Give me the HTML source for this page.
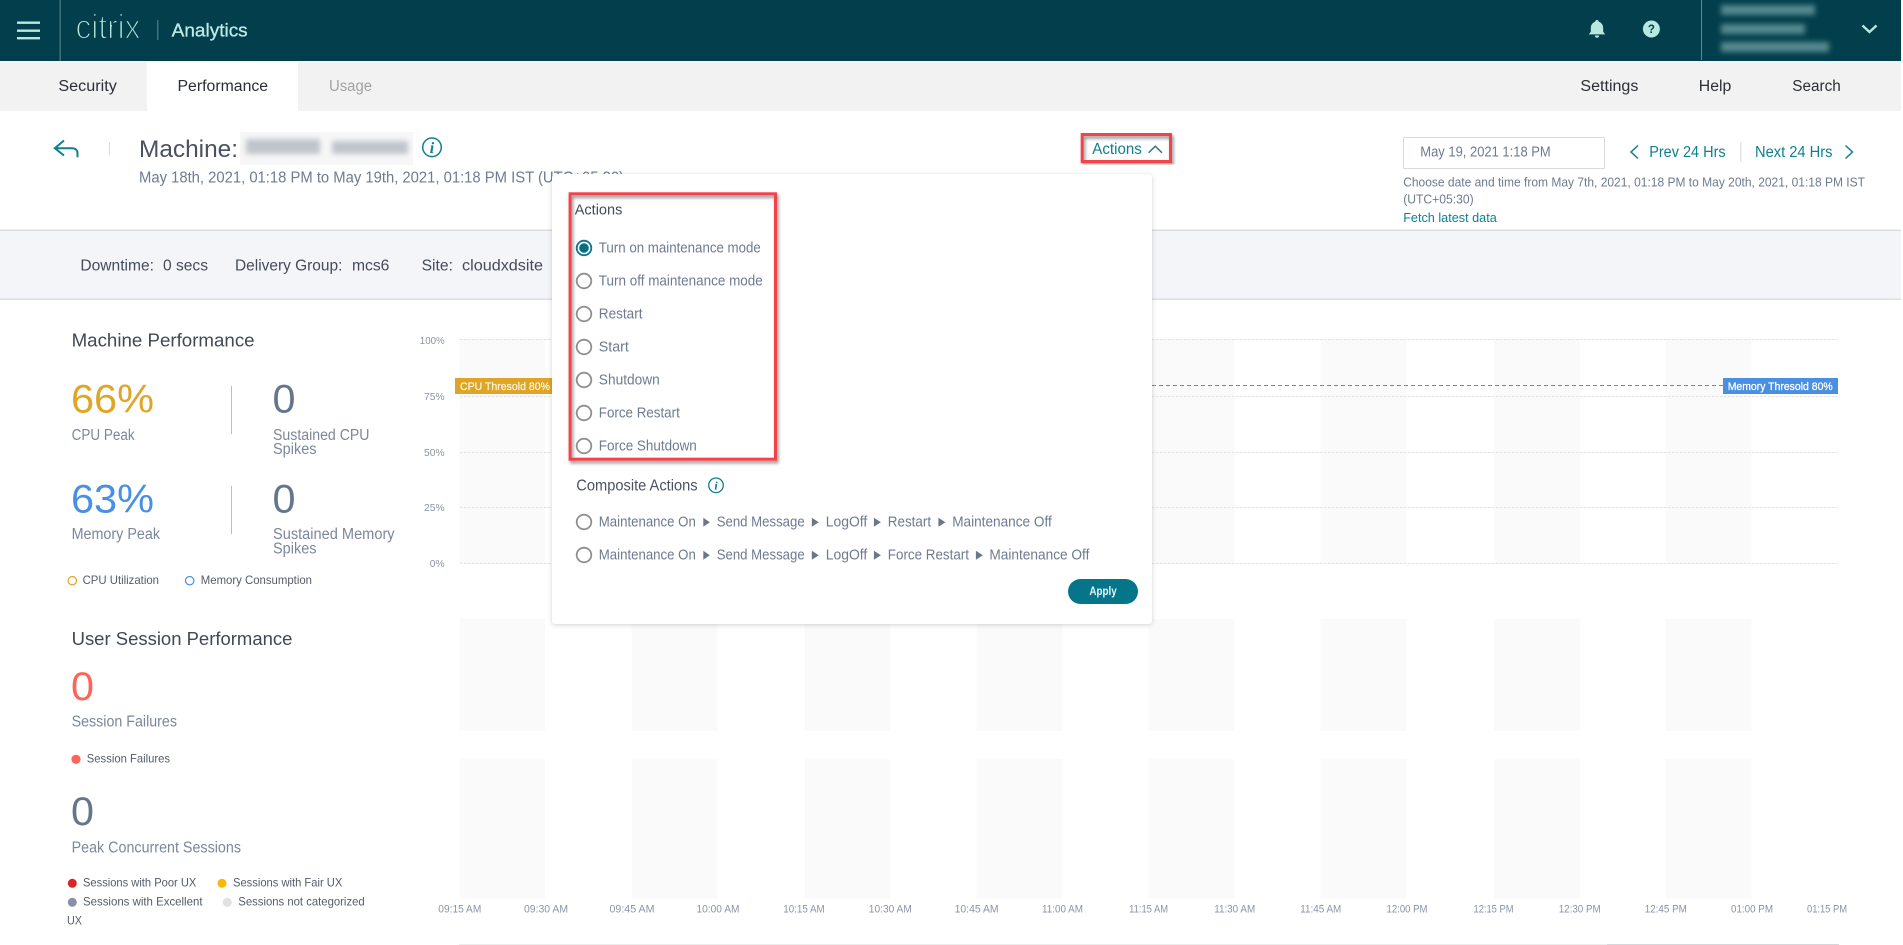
<!DOCTYPE html>
<html lang="en">
<head>
<meta charset="utf-8">
<title>Citrix Analytics - Machine Performance</title>
<style>
html,body{margin:0;padding:0;background:#fff;overflow:hidden;width:1903px;height:945px}
svg{display:block}
text{font-family:"Liberation Sans",sans-serif;white-space:pre}
.tab{font-size:15.5px;fill:#2b2f36}
.lab{font-size:15.5px;fill:#444c58}
.opt{font-size:14.5px;fill:#6e7b90}
.sec{font-size:15.5px;fill:#7b879b}
.big{font-size:40px}
.leg{font-size:12px;fill:#545c6b}
.ax{font-size:10.5px;fill:#8a93a5}
.tm{font-size:11px;fill:#8a93a5;text-anchor:middle}
.teal{fill:#0f7f8f}
.hd{font-size:18.5px;fill:#414854}
</style>
</head>
<body>
<svg xmlns="http://www.w3.org/2000/svg" width="1903" height="945" viewBox="0 0 1903 945">
<defs>
<filter id="b3" x="-20%" y="-60%" width="140%" height="220%"><feGaussianBlur stdDeviation="2.6"/></filter>
<filter id="b2" x="-20%" y="-20%" width="140%" height="140%"><feGaussianBlur stdDeviation="2.6"/></filter>
<filter id="pop" x="-5%" y="-5%" width="110%" height="110%"><feDropShadow dx="0" dy="1" stdDeviation="2.5" flood-color="#000" flood-opacity=".18"/></filter>
<filter id="red" x="-10%" y="-10%" width="120%" height="120%"><feDropShadow dx="1.5" dy="2.5" stdDeviation="1.6" flood-color="#000" flood-opacity=".45"/></filter>
</defs>

<!-- top header -->
<rect x="0" y="0" width="1901" height="61" fill="#023e4b"/>
<g fill="#b7e8e0">
<rect x="17" y="21.5" width="23" height="2.4"/><rect x="17" y="29.5" width="23" height="2.4"/><rect x="17" y="37" width="23" height="2.4"/>
</g>
<rect x="59.6" y="0" width="1" height="61" fill="#5d8a92"/>
<text x="75.5" y="38.3" font-size="34" textLength="65" lengthAdjust="spacingAndGlyphs" fill="#b7e8e0" stroke="#023e4b" stroke-width="1.5">citrix</text>
<rect x="157.3" y="20" width="1" height="20" fill="#5d8a92"/>
<text x="171.7" y="36.7" font-size="18.4" textLength="76" lengthAdjust="spacingAndGlyphs" fill="#bfeae4" stroke="#bfeae4" stroke-width=".3">Analytics</text>
<path d="M1597 20c1.2 0 1.8.8 1.8 1.8 3 .9 4.4 3.6 4.4 6.5v3.5l2 2.6h-16.400l2-2.600v-3.500c0-2.900 1.400-5.600 4.400-6.500 0-1 .6-1.800 1.800-1.800z" fill="#b7e8e0"/>
<path d="M1594.800 35.500h4.400c0 1.400-1 2.300-2.200 2.300s-2.200-.9-2.200-2.300z" fill="#b7e8e0"/>
<circle cx="1651.400" cy="29" r="8.500" fill="#b7e8e0"/>
<text x="1651.400" y="33" font-size="11.500" font-weight="bold" text-anchor="middle" fill="#023e4b">?</text>
<rect x="1701" y="0" width="1" height="60" fill="#5d8a92"/>
<g fill="#55898f" filter="url(#b2)">
<rect x="1721" y="5" width="94" height="10"/>
<rect x="1721" y="24" width="84" height="10"/>
<rect x="1721" y="42" width="108" height="10"/>
</g>
<path d="M1862.500 25.500l7 6.500 7-6.500" fill="none" stroke="#b7e8e0" stroke-width="2.400"/>

<!-- tabs -->
<rect x="0" y="61" width="1901" height="50" fill="#f2f2f2"/>
<rect x="147" y="61" width="151" height="50" fill="#fff"/>
<text class="tab" x="58.400" y="91" textLength="58.400" lengthAdjust="spacingAndGlyphs">Security</text>
<text class="tab" x="177.500" y="91" textLength="90.600" lengthAdjust="spacingAndGlyphs">Performance</text>
<text class="tab" x="329" y="91" textLength="43" lengthAdjust="spacingAndGlyphs" style="fill:#a2a2a2">Usage</text>
<text class="tab" x="1580.400" y="91" textLength="58" lengthAdjust="spacingAndGlyphs">Settings</text>
<text class="tab" x="1698.800" y="91" textLength="32.500" lengthAdjust="spacingAndGlyphs">Help</text>
<text class="tab" x="1792.300" y="91" textLength="48.500" lengthAdjust="spacingAndGlyphs">Search</text>

<!-- title area -->
<path d="M64 140.500l-9.200 7.700 9.200 7.300M55 148.200h17c3.500 0 5.500 2 5.500 5v4" fill="none" stroke="#0f7f8f" stroke-width="2"/>
<rect x="109" y="142" width="1" height="13" fill="#dcdcdc"/>
<text x="139" y="157" font-size="24" textLength="99" lengthAdjust="spacingAndGlyphs" fill="#4a5160">Machine:</text>
<rect x="240" y="132" width="173" height="33" fill="#f7f7f7"/>
<g fill="#c0c4cc" filter="url(#b3)">
<rect x="246" y="139" width="74" height="15"/>
<rect x="332" y="141" width="76" height="13"/>
</g>
<circle cx="432" cy="147.300" r="9.300" fill="none" stroke="#0f7f8f" stroke-width="1.500"/>
<text x="432" y="153" font-size="16" font-weight="bold" font-style="italic" text-anchor="middle" class="teal" style="font-family:'Liberation Serif',serif">i</text>
<text x="139" y="182.300" font-size="15.500" textLength="485" lengthAdjust="spacingAndGlyphs" fill="#6e7b90">May 18th, 2021, 01:18 PM to May 19th, 2021, 01:18 PM IST (UTC+05:30)</text>

<!-- date picker -->
<rect x="1403.500" y="137.500" width="201" height="31" rx="1" fill="#fff" stroke="#d9d9d9"/>
<text x="1420.300" y="156.700" font-size="14.500" textLength="130.400" lengthAdjust="spacingAndGlyphs" fill="#6e7b90">May 19, 2021 1:18 PM</text>
<path d="M1638 145.500l-7 6.500 7 6.500" fill="none" stroke="#0f7f8f" stroke-width="1.500"/>
<text class="teal" x="1649.200" y="157" font-size="15.500" textLength="76.500" lengthAdjust="spacingAndGlyphs">Prev 24 Hrs</text>
<rect x="1740.300" y="142" width="1" height="20" fill="#d5d5d5"/>
<text class="teal" x="1755" y="157" font-size="15.500" textLength="77.500" lengthAdjust="spacingAndGlyphs">Next 24 Hrs</text>
<path d="M1845.500 145.500l7 6.500-7 6.500" fill="none" stroke="#0f7f8f" stroke-width="1.500"/>
<text x="1403.200" y="186.700" font-size="13" textLength="461.800" lengthAdjust="spacingAndGlyphs" fill="#6e7b90">Choose date and time from May 7th, 2021, 01:18 PM to May 20th, 2021, 01:18 PM IST</text>
<text x="1403.200" y="203.300" font-size="13" textLength="70.500" lengthAdjust="spacingAndGlyphs" fill="#6e7b90">(UTC+05:30)</text>
<text class="teal" x="1403.200" y="222" font-size="13" textLength="93.600" lengthAdjust="spacingAndGlyphs">Fetch latest data</text>

<!-- info band -->
<rect x="0" y="231" width="1901" height="68" fill="#f4f5f9"/>
<rect x="0" y="229.600" width="1901" height="1.400" fill="#d9dbe0"/>
<rect x="0" y="298.600" width="1901" height="1.400" fill="#dcdde1"/>
<text class="lab" x="80.400" y="270.700" textLength="73.600" lengthAdjust="spacingAndGlyphs">Downtime:</text>
<text class="lab" x="163" y="270.700" textLength="45" lengthAdjust="spacingAndGlyphs">0 secs</text>
<text class="lab" x="235" y="270.700" textLength="107.400" lengthAdjust="spacingAndGlyphs">Delivery Group:</text>
<text class="lab" x="352" y="270.700" textLength="37.400" lengthAdjust="spacingAndGlyphs">mcs6</text>
<text class="lab" x="421.600" y="270.700" textLength="31.400" lengthAdjust="spacingAndGlyphs">Site:</text>
<text class="lab" x="462" y="270.700" textLength="81" lengthAdjust="spacingAndGlyphs">cloudxdsite</text>

<!-- left panel: machine performance -->
<text class="hd" x="71.600" y="346.700" textLength="183" lengthAdjust="spacingAndGlyphs">Machine Performance</text>
<text class="big" x="71" y="412.700" textLength="83" lengthAdjust="spacingAndGlyphs" fill="#e0a526">66%</text>
<text class="sec" x="71.600" y="440" textLength="63" lengthAdjust="spacingAndGlyphs">CPU Peak</text>
<rect x="231" y="386" width="1" height="48" fill="#b8bfc9"/>
<text class="big" x="272.500" y="412.700" textLength="23" lengthAdjust="spacingAndGlyphs" fill="#65758c">0</text>
<text class="sec" x="273" y="440" textLength="96.500" lengthAdjust="spacingAndGlyphs">Sustained CPU</text>
<text class="sec" x="273" y="454" textLength="43.500" lengthAdjust="spacingAndGlyphs">Spikes</text>
<text class="big" x="71" y="512.700" textLength="83" lengthAdjust="spacingAndGlyphs" fill="#4a90e2">63%</text>
<text class="sec" x="71.600" y="539" textLength="88.400" lengthAdjust="spacingAndGlyphs">Memory Peak</text>
<rect x="231" y="486" width="1" height="48" fill="#b8bfc9"/>
<text class="big" x="272.500" y="512.700" textLength="23" lengthAdjust="spacingAndGlyphs" fill="#65758c">0</text>
<text class="sec" x="273" y="539" textLength="121.600" lengthAdjust="spacingAndGlyphs">Sustained Memory</text>
<text class="sec" x="273" y="553.300" textLength="43.500" lengthAdjust="spacingAndGlyphs">Spikes</text>
<circle cx="72.300" cy="580.700" r="4.200" fill="none" stroke="#e0a526" stroke-width="1.200"/>
<text class="leg" x="82.600" y="584" textLength="76.400" lengthAdjust="spacingAndGlyphs">CPU Utilization</text>
<circle cx="189.700" cy="580.700" r="4.200" fill="none" stroke="#4a90e2" stroke-width="1.200"/>
<text class="leg" x="200.800" y="584" textLength="111.200" lengthAdjust="spacingAndGlyphs">Memory Consumption</text>

<!-- left panel: user session performance -->
<text class="hd" x="71.600" y="645" textLength="220.800" lengthAdjust="spacingAndGlyphs">User Session Performance</text>
<text class="big" x="71" y="700" textLength="23" lengthAdjust="spacingAndGlyphs" fill="#fb6557">0</text>
<text class="sec" x="71.600" y="726.700" textLength="105.400" lengthAdjust="spacingAndGlyphs">Session Failures</text>
<circle cx="76" cy="759.300" r="4.600" fill="#fb6557"/>
<text class="leg" x="86.800" y="762.700" textLength="83.200" lengthAdjust="spacingAndGlyphs">Session Failures</text>
<text class="big" x="71" y="825" textLength="23" lengthAdjust="spacingAndGlyphs" fill="#65758c">0</text>
<text class="sec" x="71.600" y="852.700" textLength="169.400" lengthAdjust="spacingAndGlyphs">Peak Concurrent Sessions</text>
<circle cx="72.300" cy="883.300" r="4.500" fill="#dd2525"/>
<text class="leg" x="83" y="886.700" textLength="113.300" lengthAdjust="spacingAndGlyphs">Sessions with Poor UX</text>
<circle cx="222" cy="883.300" r="4.500" fill="#fbb800"/>
<text class="leg" x="233" y="886.700" textLength="109.300" lengthAdjust="spacingAndGlyphs">Sessions with Fair UX</text>
<circle cx="72.300" cy="902.300" r="4.500" fill="#8a90a5"/>
<text class="leg" x="83" y="905.700" textLength="119.500" lengthAdjust="spacingAndGlyphs">Sessions with Excellent</text>
<circle cx="227.300" cy="902.300" r="4.500" fill="#e0e0e0"/>
<text class="leg" x="238.300" y="905.700" textLength="126.400" lengthAdjust="spacingAndGlyphs">Sessions not categorized</text>
<text class="leg" x="67" y="924.700" textLength="15" lengthAdjust="spacingAndGlyphs">UX</text>

<!-- chart bands -->
<g fill="#fafafa">
<rect x="459.500" y="339" width="85.700" height="224.500"/><rect x="631.700" y="339" width="85.700" height="224.500"/><rect x="804.700" y="339" width="85.700" height="224.500"/><rect x="976.600" y="339" width="85.700" height="224.500"/><rect x="1148.600" y="339" width="85.900" height="224.500"/><rect x="1320.600" y="339" width="86.100" height="224.500"/><rect x="1493.700" y="339" width="86.100" height="224.500"/><rect x="1665.500" y="339" width="86.100" height="224.500"/>
<rect x="459.500" y="619" width="85.700" height="112"/><rect x="631.700" y="619" width="85.700" height="112"/><rect x="804.700" y="619" width="85.700" height="112"/><rect x="976.600" y="619" width="85.700" height="112"/><rect x="1148.600" y="619" width="85.900" height="112"/><rect x="1320.600" y="619" width="86.100" height="112"/><rect x="1493.700" y="619" width="86.100" height="112"/><rect x="1665.500" y="619" width="86.100" height="112"/>
<rect x="459.500" y="759" width="85.700" height="139.700"/><rect x="631.700" y="759" width="85.700" height="139.700"/><rect x="804.700" y="759" width="85.700" height="139.700"/><rect x="976.600" y="759" width="85.700" height="139.700"/><rect x="1148.600" y="759" width="85.900" height="139.700"/><rect x="1320.600" y="759" width="86.100" height="139.700"/><rect x="1493.700" y="759" width="86.100" height="139.700"/><rect x="1665.500" y="759" width="86.100" height="139.700"/>
</g>
<g stroke="#e2e2e2" stroke-width="1" stroke-dasharray="2.500 1.500">
<path d="M460 339.500H1838M460 396.500H1838M460 452.500H1838M460 507.500H1838M460 563.500H1838"/>
</g>
<text class="ax" x="419.800" y="344" textLength="24.800" lengthAdjust="spacingAndGlyphs">100%</text>
<text class="ax" x="424" y="400" textLength="20.600" lengthAdjust="spacingAndGlyphs">75%</text>
<text class="ax" x="424" y="456" textLength="20.600" lengthAdjust="spacingAndGlyphs">50%</text>
<text class="ax" x="424" y="511" textLength="20.600" lengthAdjust="spacingAndGlyphs">25%</text>
<text class="ax" x="429.800" y="567" textLength="14.800" lengthAdjust="spacingAndGlyphs">0%</text>
<rect x="455" y="378" width="97" height="16" fill="#dfa526"/>
<text x="460" y="390" font-size="11" textLength="90" lengthAdjust="spacingAndGlyphs" fill="#fff3d8" stroke="#fff3d8" stroke-width=".25">CPU Thresold 80%</text>
<path d="M1152 385.500H1723" stroke="#4a90e2" stroke-width="1" stroke-dasharray="4 3"/>
<rect x="1723" y="378" width="115" height="16" fill="#4a90e2"/>
<text x="1727.700" y="390" font-size="11" textLength="105" lengthAdjust="spacingAndGlyphs" fill="#fff" stroke="#fff" stroke-width=".25">Memory Thresold 80%</text>

<!-- time axis -->
<text class="tm" x="459.800" y="912.700" textLength="43" lengthAdjust="spacingAndGlyphs">09:15 AM</text>
<text class="tm" x="546" y="912.700" textLength="44" lengthAdjust="spacingAndGlyphs">09:30 AM</text>
<text class="tm" x="632" y="912.700" textLength="45" lengthAdjust="spacingAndGlyphs">09:45 AM</text>
<text class="tm" x="718" y="912.700" textLength="43" lengthAdjust="spacingAndGlyphs">10:00 AM</text>
<text class="tm" x="804" y="912.700" textLength="41.500" lengthAdjust="spacingAndGlyphs">10:15 AM</text>
<text class="tm" x="890.300" y="912.700" textLength="43" lengthAdjust="spacingAndGlyphs">10:30 AM</text>
<text class="tm" x="976.600" y="912.700" textLength="44" lengthAdjust="spacingAndGlyphs">10:45 AM</text>
<text class="tm" x="1062.500" y="912.700" textLength="41" lengthAdjust="spacingAndGlyphs">11:00 AM</text>
<text class="tm" x="1148.600" y="912.700" textLength="39" lengthAdjust="spacingAndGlyphs">11:15 AM</text>
<text class="tm" x="1234.700" y="912.700" textLength="41" lengthAdjust="spacingAndGlyphs">11:30 AM</text>
<text class="tm" x="1320.800" y="912.700" textLength="41" lengthAdjust="spacingAndGlyphs">11:45 AM</text>
<text class="tm" x="1407" y="912.700" textLength="41" lengthAdjust="spacingAndGlyphs">12:00 PM</text>
<text class="tm" x="1493.500" y="912.700" textLength="40" lengthAdjust="spacingAndGlyphs">12:15 PM</text>
<text class="tm" x="1579.700" y="912.700" textLength="42" lengthAdjust="spacingAndGlyphs">12:30 PM</text>
<text class="tm" x="1665.800" y="912.700" textLength="42" lengthAdjust="spacingAndGlyphs">12:45 PM</text>
<text class="tm" x="1752" y="912.700" textLength="42" lengthAdjust="spacingAndGlyphs">01:00 PM</text>
<text class="tm" x="1827" y="912.700" textLength="40" lengthAdjust="spacingAndGlyphs">01:15 PM</text>
<rect x="459" y="944" width="1148" height="1" fill="#ececec"/>
<rect x="1607" y="944" width="232" height="1" fill="#d6d6de"/>

<!-- popup -->
<rect x="552" y="174" width="600" height="450" rx="3.500" fill="#fff" filter="url(#pop)"/>
<text x="574.700" y="214.300" font-size="15" textLength="47.700" lengthAdjust="spacingAndGlyphs" fill="#454b57">Actions</text>
<circle cx="584" cy="248" r="7.300" fill="#fff" stroke="#0b7488" stroke-width="1.800"/>
<circle cx="584" cy="248" r="4.800" fill="#056f80"/>
<g fill="#fff" stroke="#8f8f8f" stroke-width="1.800">
<circle cx="584" cy="281" r="7.300"/><circle cx="584" cy="314" r="7.300"/><circle cx="584" cy="347" r="7.300"/><circle cx="584" cy="380" r="7.300"/><circle cx="584" cy="413" r="7.300"/><circle cx="584" cy="446" r="7.300"/><circle cx="584" cy="522" r="7.300"/><circle cx="584" cy="555" r="7.300"/>
</g>
<text class="opt" x="598.800" y="252.700" textLength="162" lengthAdjust="spacingAndGlyphs">Turn on maintenance mode</text>
<text class="opt" x="598.800" y="285.700" textLength="164" lengthAdjust="spacingAndGlyphs">Turn off maintenance mode</text>
<text class="opt" x="598.800" y="318.700" textLength="43.700" lengthAdjust="spacingAndGlyphs">Restart</text>
<text class="opt" x="598.800" y="351.700" textLength="30" lengthAdjust="spacingAndGlyphs">Start</text>
<text class="opt" x="598.800" y="384.700" textLength="61" lengthAdjust="spacingAndGlyphs">Shutdown</text>
<text class="opt" x="598.800" y="417.700" textLength="81" lengthAdjust="spacingAndGlyphs">Force Restart</text>
<text class="opt" x="598.800" y="450.700" textLength="98" lengthAdjust="spacingAndGlyphs">Force Shutdown</text>

<text x="576.300" y="490.700" font-size="15.500" textLength="121.300" lengthAdjust="spacingAndGlyphs" fill="#4b5260">Composite Actions</text>
<circle cx="716" cy="485.300" r="7.300" fill="none" stroke="#0f7f8f" stroke-width="1.300"/>
<text x="716" y="489.700" font-size="12" font-weight="bold" font-style="italic" text-anchor="middle" class="teal" style="font-family:'Liberation Serif',serif">i</text>

<text class="opt" x="598.800" y="526.700" textLength="97" lengthAdjust="spacingAndGlyphs">Maintenance On</text>
<path d="M703.300 517.700v9l6.500-4.500z" fill="#6b7689"/>
<text class="opt" x="716.700" y="526.700" textLength="88" lengthAdjust="spacingAndGlyphs">Send Message</text>
<path d="M811.800 517.700v9l7-4.500z" fill="#6b7689"/>
<text class="opt" x="825.700" y="526.700" textLength="41.600" lengthAdjust="spacingAndGlyphs">LogOff</text>
<path d="M873.900 517.700v9l7-4.500z" fill="#6b7689"/>
<text class="opt" x="887.800" y="526.700" textLength="43.300" lengthAdjust="spacingAndGlyphs">Restart</text>
<path d="M938.400 517.700v9l7-4.500z" fill="#6b7689"/>
<text class="opt" x="952.200" y="526.700" textLength="99.600" lengthAdjust="spacingAndGlyphs">Maintenance Off</text>

<text class="opt" x="598.800" y="559.700" textLength="97" lengthAdjust="spacingAndGlyphs">Maintenance On</text>
<path d="M703.300 550.700v9l6.500-4.500z" fill="#6b7689"/>
<text class="opt" x="716.700" y="559.700" textLength="88" lengthAdjust="spacingAndGlyphs">Send Message</text>
<path d="M811.800 550.700v9l7-4.500z" fill="#6b7689"/>
<text class="opt" x="825.700" y="559.700" textLength="41.600" lengthAdjust="spacingAndGlyphs">LogOff</text>
<path d="M873.900 550.700v9l7-4.500z" fill="#6b7689"/>
<text class="opt" x="887.800" y="559.700" textLength="81.200" lengthAdjust="spacingAndGlyphs">Force Restart</text>
<path d="M975.900 550.700v9l7-4.500z" fill="#6b7689"/>
<text class="opt" x="989.400" y="559.700" textLength="100" lengthAdjust="spacingAndGlyphs">Maintenance Off</text>

<rect x="1068" y="579" width="70" height="25" rx="12.500" fill="#057589"/>
<text x="1089.400" y="595" font-size="11.500" font-weight="bold" textLength="27.300" lengthAdjust="spacingAndGlyphs" fill="#e8f6f7">Apply</text>

<!-- actions toggle -->
<text class="teal" x="1092.300" y="154" font-size="15.500" textLength="49.500" lengthAdjust="spacingAndGlyphs">Actions</text>
<path d="M1148.600 152.700l6.700-6.500 6.700 6.500" fill="none" stroke="#2c6f7c" stroke-width="1.400"/>

<!-- red annotation boxes -->
<rect x="1082.200" y="134.500" width="88.300" height="27" fill="none" stroke="#f4424c" stroke-width="3" filter="url(#red)"/>
<rect x="570.100" y="193.800" width="205.400" height="265.400" fill="none" stroke="#f4424c" stroke-width="3" filter="url(#red)"/>
</svg>
</body>
</html>
